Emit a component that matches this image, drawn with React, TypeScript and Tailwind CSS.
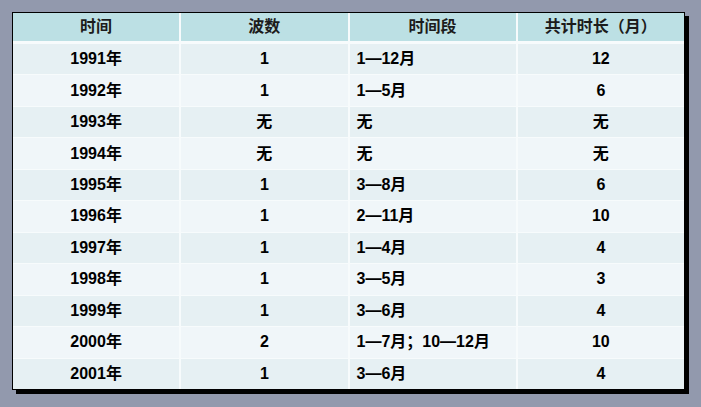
const ROWS = [
  ['1991年', '1', '1—12月', '12'],
  ['1992年', '1', '1—5月', '6'],
  ['1993年', '无', '无', '无'],
  ['1994年', '无', '无', '无'],
  ['1995年', '1', '3—8月', '6'],
  ['1996年', '1', '2—11月', '10'],
  ['1997年', '1', '1—4月', '4'],
  ['1998年', '1', '3—5月', '3'],
  ['1999年', '1', '3—6月', '4'],
  ['2000年', '2', '1—7月；10—12月', '10'],
  ['2001年', '1', '3—6月', '4'],
];

const HEAD = ['时间', '波数', '时间段', '共计时长（月）'];

export default function App() {
  return (
    <div className="w-[701px] h-[407px] bg-[#9299ad] pt-[12px] pl-[12px] font-['Liberation_Sans','Noto_Sans_CJK_SC',sans-serif] font-bold text-[16px]">
      <div className="w-[673px] h-[378px] border border-black bg-[#f7fbfc] shadow-[4px_4px_0_#000]">
        <div className="grid h-full grid-cols-4 grid-rows-[30px_repeat(11,1fr)] gap-x-[2px] gap-y-[1px]">
          {HEAD.map((h) => (
            <div key={h} className="flex items-center justify-center bg-[#bce0e4] text-[#1c1c1c] mb-[2px]">
              {h}
            </div>
          ))}
          {ROWS.map((row, i) =>
            row.map((cell, j) => (
              <div
                key={`${i}-${j}`}
                className={`flex items-center text-black ${
                  j === 2 ? 'justify-start pl-[7px]' : 'justify-center'
                } ${i % 2 === 0 ? 'bg-[#e6f0f3]' : 'bg-[#f0f6f9]'}`}
              >
                {cell}
              </div>
            ))
          )}
        </div>
      </div>
    </div>
  );
}
